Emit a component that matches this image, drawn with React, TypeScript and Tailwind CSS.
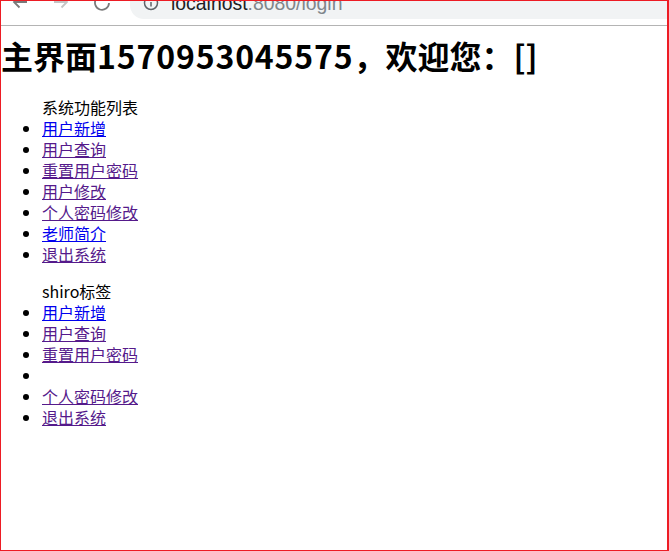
import React from 'react';

const font = '[font-family:"Noto_Sans_CJK_SC","Liberation_Sans",sans-serif]';

const blue = 'text-[#0000ee] underline';
const purple = 'text-[#551a8b] underline';

function MenuItem({ label, visited = true }: { label?: string; visited?: boolean }) {
    return (
        <li className="h-[21px] leading-[21px]">
            {label && <a href="#" className={visited ? purple : blue}>{label}</a>}
        </li>
    );
}

function ToolbarIcon({ children }: { children: React.ReactNode }) {
    return (
        <svg width="20" height="20" viewBox="0 0 20 20" fill="none" strokeWidth="1.8" className="shrink-0">
            {children}
        </svg>
    );
}

export default function App() {
    return (
        <div className={`w-[669px] h-[551px] bg-white border border-[#ed1c24] border-r-2 overflow-hidden text-black ${font}`}>
            {/* browser toolbar, cropped at the top */}
            <div className="h-[25px] border-b border-[#b4b4b4] overflow-hidden flex items-start">
                <div className="flex w-[129px] shrink-0 -mt-[9px] pl-[9px] gap-[21px]">
                    <ToolbarIcon>
                        <path d="M17 10H4M9.500 4.500 4 10l5.500 5.500" stroke="#7a7a7a" />
                    </ToolbarIcon>
                    <ToolbarIcon>
                        <path d="M3 10h13M10.500 4.500 16 10l-5.500 5.500" stroke="#c4c4c4" />
                    </ToolbarIcon>
                    <ToolbarIcon>
                        <path d="M15.500 6.500A7 7 0 1 0 17 11M16 2.500v5h-5" stroke="#7a7a7a" />
                    </ToolbarIcon>
                </div>
                <div className="flex-1 h-[18px] bg-[#f1f3f4] rounded-bl-[14px] overflow-hidden">
                    <div className="flex items-center gap-[12px] pl-[13px] h-[18px] -mt-[7px]">
                        <svg width="16" height="16" viewBox="0 0 16 16" fill="none" className="shrink-0">
                            <circle cx="8" cy="8" r="6.500" stroke="#5f6368" strokeWidth="1.500" />
                            <path d="M8 7v4.500M8 4.500v1.300" stroke="#5f6368" strokeWidth="1.500" />
                        </svg>
                        <span className="text-[19.4px] leading-[18px] [font-family:'Liberation_Sans',sans-serif] whitespace-nowrap">
                            <span className="text-[#202124]">localhost</span>
                            <span className="text-[#80868b]">:8080/login</span>
                        </span>
                    </div>
                </div>
            </div>

            <h1 className="text-[32px] font-bold leading-[42px] mt-[8px] mb-[21px] whitespace-nowrap">
                主界面<span className="tracking-[0.85px]">1570953045575</span>，欢迎您：[]
            </h1>

            <ul className="list-disc pl-[41px] mb-4 text-base">
                <li className="list-none h-[21px] leading-[21px]">系统功能列表</li>
                <MenuItem label="用户新增" visited={false} />
                <MenuItem label="用户查询" />
                <MenuItem label="重置用户密码" />
                <MenuItem label="用户修改" />
                <MenuItem label="个人密码修改" />
                <MenuItem label="老师简介" visited={false} />
                <MenuItem label="退出系统" />
            </ul>

            <ul className="list-disc pl-[41px] text-base">
                <li className="list-none h-[21px] leading-[21px]">shiro标签</li>
                <MenuItem label="用户新增" visited={false} />
                <MenuItem label="用户查询" />
                <MenuItem label="重置用户密码" />
                <MenuItem />
                <MenuItem label="个人密码修改" />
                <MenuItem label="退出系统" />
            </ul>
        </div>
    );
}
